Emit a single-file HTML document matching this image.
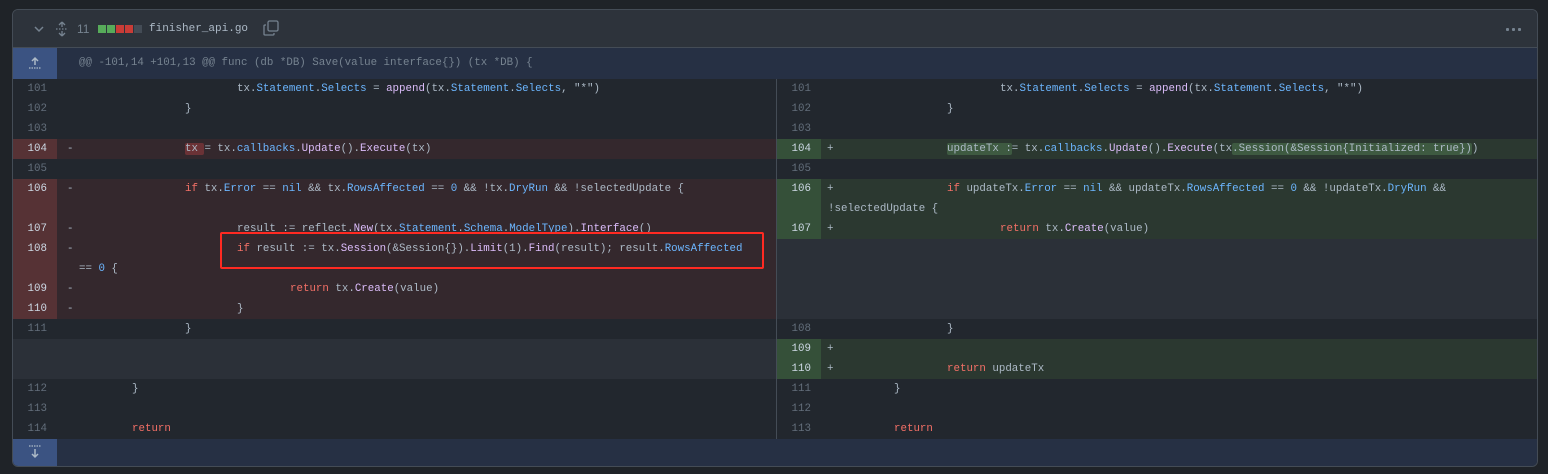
<!DOCTYPE html>
<html><head><meta charset="utf-8"><style>
*{margin:0;padding:0;box-sizing:border-box}
body{width:1548px;height:474px;background:#1f2328;position:relative;overflow:hidden;font-family:"Liberation Mono",monospace;}
.box{position:absolute;left:12px;top:9px;width:1526px;height:458px;border:1px solid #444c56;border-radius:6px;background:#22272e;overflow:hidden}
.r{position:absolute;height:20px}
.t{position:absolute;font-size:10.8px;line-height:20px;color:#adbac7;white-space:pre}
.n{position:absolute;font-size:10.8px;line-height:20px;color:#636e7b;text-align:right;width:34px}
.nb{color:#cdd9e5}
.k{color:#f47067}.p{color:#6cb6ff}.f{color:#dcbdfb}
.hd{background:#6b3236;border-radius:2px}
.ha{background:#3e5a41;border-radius:2px}
</style></head><body>
<div class="box">
 <div style="position:absolute;left:0;top:0;width:1526px;height:38px;background:#2d333b;border-bottom:1px solid #444c56"></div>
 <svg style="position:absolute;left:20px;top:14px" width="12" height="10" viewBox="0 0 12 10"><path d="M2 3 L6 7 L10 3" stroke="#768390" stroke-width="1.5" fill="none"/></svg>
 <svg style="position:absolute;left:42px;top:11px" width="14" height="16" viewBox="0 0 14 16"><path d="M7 1 L4 4 M7 1 L10 4 M7 1 V6 M7 15 L4 12 M7 15 L10 12 M7 15 V10" stroke="#768390" stroke-width="1.3" fill="none"/><path d="M1 8 H13" stroke="#768390" stroke-width="1.3" stroke-dasharray="1.5 1.5"/></svg>
 <div style="position:absolute;left:64px;top:12px;font-size:12px;color:#768390;font-family:'Liberation Sans',sans-serif">11</div>
 <div style="position:absolute;left:85px;top:15px;width:8px;height:8px;background:#57ab5a"></div>
 <div style="position:absolute;left:94px;top:15px;width:8px;height:8px;background:#57ab5a"></div>
 <div style="position:absolute;left:103px;top:15px;width:8px;height:8px;background:#c93c37"></div>
 <div style="position:absolute;left:112px;top:15px;width:8px;height:8px;background:#c93c37"></div>
 <div style="position:absolute;left:121px;top:15px;width:8px;height:8px;background:#444c56"></div>
 <div style="position:absolute;left:136px;top:10px;font-size:11px;color:#adbac7;line-height:18px">finisher_api.go</div>
 <svg style="position:absolute;left:250px;top:10px" width="16" height="16" viewBox="0 0 16 16"><rect x="5" y="1" width="10" height="10" rx="1.5" stroke="#768390" stroke-width="1.3" fill="none"/><path d="M3 5 H2 Q1 5 1 6 V14 Q1 15 2 15 H10 Q11 15 11 14 V13" stroke="#768390" stroke-width="1.3" fill="none"/></svg>
 <div style="position:absolute;left:1493px;top:18px;width:3px;height:3px;background:#768390;border-radius:1px;box-shadow:6px 0 #768390,12px 0 #768390"></div>
 <div class="r" style="left:0;top:38px;width:1526px;height:31px;background:#263044"></div>
 <div class="r" style="left:0;top:38px;width:44px;height:31px;background:#3b5382"></div>
 <svg style="position:absolute;left:15px;top:46px" width="14" height="14" viewBox="0 0 14 14"><path d="M7 2 V9 M4 5 L7 2 L10 5" stroke="#adbac7" stroke-width="1.5" fill="none"/><path d="M1 12 H13" stroke="#adbac7" stroke-width="1.3" stroke-dasharray="1.5 1"/></svg>
 <div class="t" style="left:66px;top:43px;color:#768390">@@ -101,14 +101,13 @@ func (db *DB) Save(value interface{}) (tx *DB) {</div>
 <div style="position:absolute;left:763px;top:69px;width:1px;height:360px;background:#444c56;z-index:2"></div>
 <div class="r" style="left:0;top:129px;width:763px;background:#34282d"></div><div class="r" style="left:0;top:129px;width:44px;background:#563235"></div>
 <div class="r" style="left:0;top:169px;width:763px;height:140px;background:#34282d"></div><div class="r" style="left:0;top:169px;width:44px;height:140px;background:#563235"></div>
 <div class="r" style="left:0;top:329px;width:763px;height:40px;background:#2b3038"></div>
 <div class="r" style="left:764px;top:129px;width:762px;background:#2b3830"></div><div class="r" style="left:764px;top:129px;width:44px;background:#355039"></div>
 <div class="r" style="left:764px;top:169px;width:762px;height:60px;background:#2b3830"></div><div class="r" style="left:764px;top:169px;width:44px;height:60px;background:#355039"></div>
 <div class="r" style="left:764px;top:229px;width:762px;height:80px;background:#2b3038"></div>
 <div class="r" style="left:764px;top:329px;width:762px;height:40px;background:#2b3830"></div><div class="r" style="left:764px;top:329px;width:44px;height:40px;background:#355039"></div>
 <div class="r" style="left:0;top:429px;width:1526px;height:29px;background:#263044"></div>
 <div class="r" style="left:0;top:429px;width:44px;height:29px;background:#3b5382"></div>
 <svg style="position:absolute;left:15px;top:434px" width="14" height="16" viewBox="0 0 14 16"><path d="M1 2 H13" stroke="#adbac7" stroke-width="1.3" stroke-dasharray="1.5 1"/><path d="M7 5 V13 M4 10 L7 13 L10 10" stroke="#adbac7" stroke-width="1.5" fill="none"/></svg>

 <div class="n" style="left:0;top:69px">101</div>
 <div class="n" style="left:0;top:89px">102</div>
 <div class="n" style="left:0;top:109px">103</div>
 <div class="n nb" style="left:0;top:129px">104</div>
 <div class="n" style="left:0;top:149px">105</div>
 <div class="n nb" style="left:0;top:169px">106</div>
 <div class="n nb" style="left:0;top:209px">107</div>
 <div class="n nb" style="left:0;top:229px">108</div>
 <div class="n nb" style="left:0;top:269px">109</div>
 <div class="n nb" style="left:0;top:289px">110</div>
 <div class="n" style="left:0;top:309px">111</div>
 <div class="n" style="left:0;top:369px">112</div>
 <div class="n" style="left:0;top:389px">113</div>
 <div class="n" style="left:0;top:409px">114</div>
 <div class="t" style="left:54px;top:129px">-</div>
 <div class="t" style="left:54px;top:169px">-</div>
 <div class="t" style="left:54px;top:209px">-</div>
 <div class="t" style="left:54px;top:229px">-</div>
 <div class="t" style="left:54px;top:269px">-</div>
 <div class="t" style="left:54px;top:289px">-</div>
 <div class="t" style="left:224px;top:69px">tx.<span class="p">Statement</span>.<span class="p">Selects</span> = <span class="f">append</span>(tx.<span class="p">Statement</span>.<span class="p">Selects</span>, "*")</div>
 <div class="t" style="left:172px;top:89px">}</div>
 <div class="t" style="left:172px;top:129px"><span class="hd">tx </span>= tx.<span class="p">callbacks</span>.<span class="f">Update</span>().<span class="f">Execute</span>(tx)</div>
 <div class="t" style="left:172px;top:169px"><span class="k">if</span> tx.<span class="p">Error</span> == <span class="p">nil</span> &amp;&amp; tx.<span class="p">RowsAffected</span> == <span class="p">0</span> &amp;&amp; !tx.<span class="p">DryRun</span> &amp;&amp; !selectedUpdate {</div>
 <div class="t" style="left:224px;top:209px">result := reflect.<span class="f">New</span>(tx.<span class="p">Statement</span>.<span class="p">Schema</span>.<span class="p">ModelType</span>).<span class="f">Interface</span>()</div>
 <div class="t" style="left:224px;top:229px"><span class="k">if</span> result := tx.<span class="f">Session</span>(&amp;Session{}).<span class="f">Limit</span>(1).<span class="f">Find</span>(result); result.<span class="p">RowsAffected</span></div>
 <div class="t" style="left:66px;top:249px">== <span class="p">0</span> {</div>
 <div class="t" style="left:277px;top:269px"><span class="k">return</span> tx.<span class="f">Create</span>(value)</div>
 <div class="t" style="left:224px;top:289px">}</div>
 <div class="t" style="left:172px;top:309px">}</div>
 <div class="t" style="left:119px;top:369px">}</div>
 <div class="t" style="left:119px;top:409px"><span class="k">return</span></div>
 <div style="position:absolute;left:207px;top:222px;width:544px;height:37px;border:2px solid #ff2a22;border-radius:2px;z-index:3"></div>

 <div class="n" style="left:764px;top:69px">101</div>
 <div class="n" style="left:764px;top:89px">102</div>
 <div class="n" style="left:764px;top:109px">103</div>
 <div class="n nb" style="left:764px;top:129px">104</div>
 <div class="n" style="left:764px;top:149px">105</div>
 <div class="n nb" style="left:764px;top:169px">106</div>
 <div class="n nb" style="left:764px;top:209px">107</div>
 <div class="n" style="left:764px;top:309px">108</div>
 <div class="n nb" style="left:764px;top:329px">109</div>
 <div class="n nb" style="left:764px;top:349px">110</div>
 <div class="n" style="left:764px;top:369px">111</div>
 <div class="n" style="left:764px;top:389px">112</div>
 <div class="n" style="left:764px;top:409px">113</div>
 <div class="t" style="left:814px;top:129px">+</div>
 <div class="t" style="left:814px;top:169px">+</div>
 <div class="t" style="left:814px;top:209px">+</div>
 <div class="t" style="left:814px;top:329px">+</div>
 <div class="t" style="left:814px;top:349px">+</div>
 <div class="t" style="left:987px;top:69px">tx.<span class="p">Statement</span>.<span class="p">Selects</span> = <span class="f">append</span>(tx.<span class="p">Statement</span>.<span class="p">Selects</span>, "*")</div>
 <div class="t" style="left:934px;top:89px">}</div>
 <div class="t" style="left:934px;top:129px"><span class="ha">updateTx :</span>= tx.<span class="p">callbacks</span>.<span class="f">Update</span>().<span class="f">Execute</span>(tx<span class="ha">.Session(&amp;Session{Initialized: true})</span>)</div>
 <div class="t" style="left:934px;top:169px"><span class="k">if</span> updateTx.<span class="p">Error</span> == <span class="p">nil</span> &amp;&amp; updateTx.<span class="p">RowsAffected</span> == <span class="p">0</span> &amp;&amp; !updateTx.<span class="p">DryRun</span> &amp;&amp;</div>
 <div class="t" style="left:815px;top:189px">!selectedUpdate {</div>
 <div class="t" style="left:987px;top:209px"><span class="k">return</span> tx.<span class="f">Create</span>(value)</div>
 <div class="t" style="left:934px;top:309px">}</div>
 <div class="t" style="left:934px;top:349px"><span class="k">return</span> updateTx</div>
 <div class="t" style="left:881px;top:369px">}</div>
 <div class="t" style="left:881px;top:409px"><span class="k">return</span></div>
</div>
</body></html>
